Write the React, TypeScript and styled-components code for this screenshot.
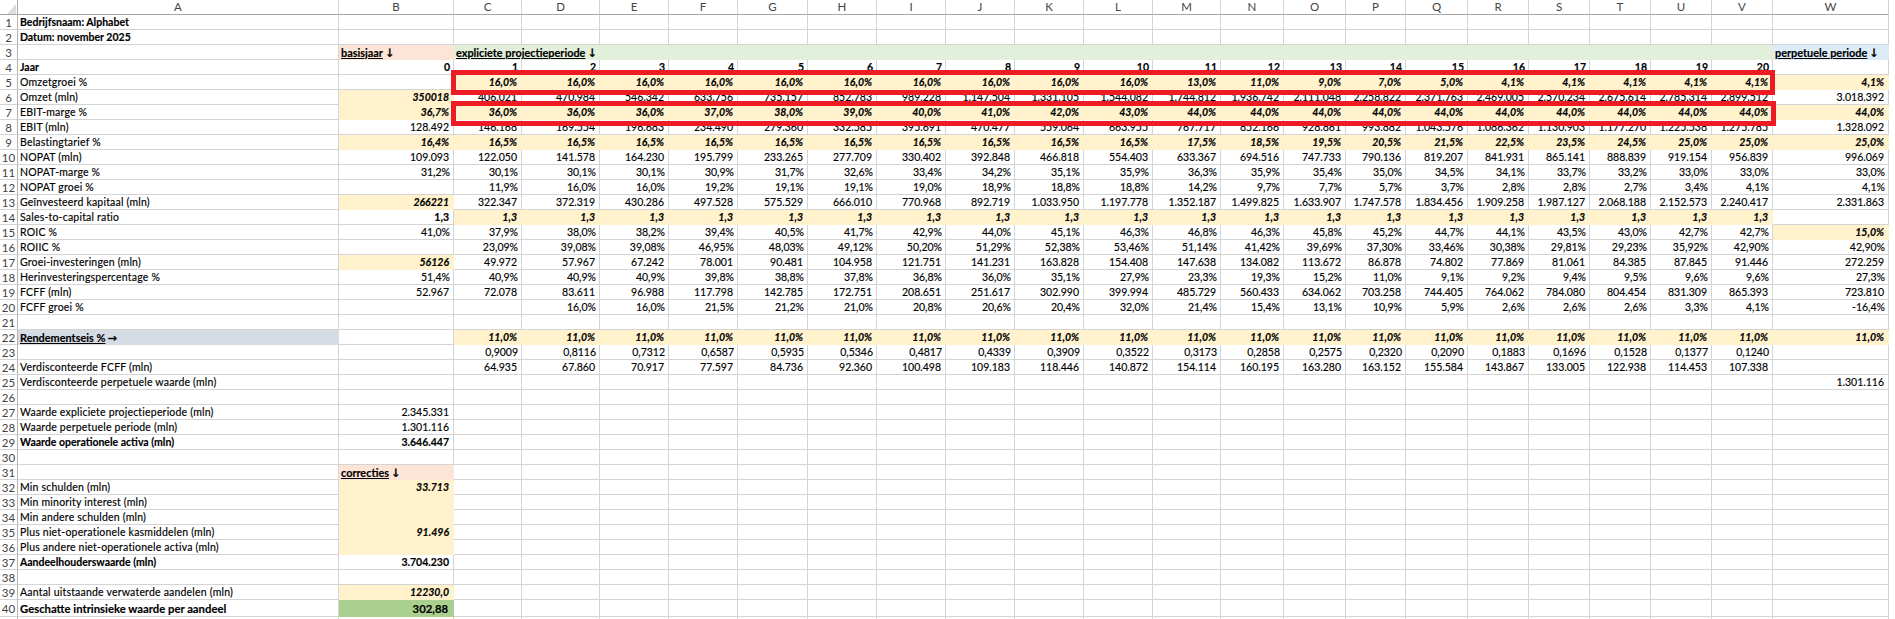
import React from 'react';
import styled, { createGlobalStyle } from 'styled-components';

const Global = createGlobalStyle`
  html, body { margin: 0; padding: 0; background: #fff; height: 619px; overflow: hidden; }
`;

const edges = [0, 18, 339, 454, 522, 600, 669, 738, 808, 877, 946, 1015, 1084, 1153, 1221, 1284, 1346, 1406, 1468, 1529, 1590, 1651, 1712, 1773, 1889];
const letters = 'ABCDEFGHIJKLMNOPQRSTUVW'.split('');

const colors = {
  grid: '#d4d4d4',
  input: '#fff2cc',
  salmon: '#fce4d6',
  green: '#e2efda',
  blue: '#ddebf7',
  slate: '#d6dce4',
  result: '#a9d08e',
};

const Sheet = styled.div`
  position: relative;
  width: 1889px;
  height: 619px;
  overflow: hidden;
`;

const Grid = styled.table`
  border-collapse: separate;
  border-spacing: 0;
  table-layout: fixed;
  width: 1889px;
  font-family: Lato, 'Liberation Sans', sans-serif;
  font-size: 10.5px;
  color: #000;
  -webkit-text-stroke: 0.15px #000;
`;

const Column = styled.col<{ $w: number }>`
  width: ${p => p.$w}px;
`;

const ColHead = styled.th`
  height: 15px;
  box-sizing: border-box;
  padding: 0;
  font-weight: 400;
  font-size: 11.5px;
  line-height: 14px;
  text-align: center;
  color: #444;
  -webkit-text-stroke: 0;
  border-right: 1px solid ${colors.grid};
  border-bottom: 1px solid #a6a6a6;
`;

const Corner = styled(ColHead)`
  border-right-color: #a6a6a6;
`;

const CornerMark = styled.svg`
  display: block;
  margin: 3px 0 0 7px;
`;

const RowHead = styled.th<{ $tall?: boolean }>`
  height: ${p => (p.$tall ? 17 : 15)}px;
  box-sizing: border-box;
  padding: 1px 0 0;
  font-weight: 400;
  font-size: 11.5px;
  line-height: 13px;
  text-align: center;
  color: #444;
  -webkit-text-stroke: 0;
  border-right: 1px solid #b4b4b4;
  border-bottom: 1px solid ${colors.grid};
`;

const cellSize = (p: { $large?: boolean; $head?: boolean }) => {
  if (p.$large) return '11.3px';
  if (p.$head) return '10.9px';
  return '10.5px';
};

const Cell = styled.td<{
  $fill?: string;
  $bold?: boolean;
  $italic?: boolean;
  $pad?: number;
  $large?: boolean;
  $left?: boolean;
  $head?: boolean;
}>`
  height: ${p => (p.$large ? 17 : 15)}px;
  box-sizing: border-box;
  padding: 1px ${p => p.$pad ?? 2}px 0 2px;
  line-height: 13px;
  white-space: nowrap;
  overflow: hidden;
  text-align: ${p => (p.$left ? 'left' : 'right')};
  font-size: ${cellSize};
  font-weight: ${p => (p.$bold ? 700 : 400)};
  font-style: ${p => (p.$italic ? 'italic' : 'normal')};
  letter-spacing: ${p => (p.$left && !p.$bold ? '0.2px' : '0')};
  background: ${p => p.$fill ?? 'transparent'};
  border-right: 1px solid ${p => p.$fill ?? colors.grid};
  border-bottom: 1px solid ${p => p.$fill ?? colors.grid};
`;

const Underlined = styled.span`
  text-decoration: underline;
`;

const Arrow = styled.span`
  font-family: 'DejaVu Sans', sans-serif;
  font-weight: 700;
  font-size: 11.5px;
  line-height: 0;
  margin-left: 2px;
`;

const RedBox = styled.div<{ $top: number; $right: number }>`
  position: absolute;
  left: 451px;
  top: ${p => p.$top}px;
  width: ${p => p.$right - 451}px;
  height: 25px;
  box-sizing: border-box;
  border: 5px solid #ed1c24;
`;

type Kind = 'num' | 'pct' | 'input' | 'strong';
type RowData = {
  n: number;
  label?: string;
  strong?: boolean;
  b?: string;
  bKind?: Kind;
  vals?: string[];
  kind?: Kind;
  wKind?: Kind;
};

const list = (s: string) => s.split(' ').map(x => (x === '_' ? '' : x));
const pct = (s: string) => s.split(' ').map(x => (x === '_' ? '' : `${x}%`));
const rep = (s: string, n: number) => Array(n).fill(s).join(' ');

const rows: RowData[] = [
  { n: 5, label: 'Omzetgroei %', vals: pct(`${rep('16,0', 10)} 13,0 11,0 9,0 7,0 5,0 ${rep('4,1', 6)}`), kind: 'input' },
  { n: 6, label: 'Omzet (mln)', b: '350018', bKind: 'input', vals: list('406.021 470.984 546.342 633.756 735.157 852.783 989.228 1.147.504 1.331.105 1.544.082 1.744.812 1.936.742 2.111.048 2.258.822 2.371.763 2.469.005 2.570.234 2.675.614 2.785.314 2.899.512 3.018.392'), kind: 'num' },
  { n: 7, label: 'EBIT-marge %', b: '36,7%', bKind: 'input', vals: pct(`36,0 36,0 36,0 37,0 38,0 39,0 40,0 41,0 42,0 43,0 ${rep('44,0', 11)}`), kind: 'input' },
  { n: 8, label: 'EBIT (mln)', b: '128.492', bKind: 'num', vals: list('146.168 169.554 196.683 234.490 279.360 332.585 395.691 470.477 559.064 663.955 767.717 852.166 928.861 993.882 1.043.576 1.086.362 1.130.903 1.177.270 1.225.538 1.275.785 1.328.092'), kind: 'num' },
  { n: 9, label: 'Belastingtarief %', b: '16,4%', bKind: 'input', vals: pct(`${rep('16,5', 10)} 17,5 18,5 19,5 20,5 21,5 22,5 23,5 24,5 25,0 25,0 25,0`), kind: 'input' },
  { n: 10, label: 'NOPAT (mln)', b: '109.093', bKind: 'num', vals: list('122.050 141.578 164.230 195.799 233.265 277.709 330.402 392.848 466.818 554.403 633.367 694.516 747.733 790.136 819.207 841.931 865.141 888.839 919.154 956.839 996.069'), kind: 'num' },
  { n: 11, label: 'NOPAT-marge %', b: '31,2%', bKind: 'pct', vals: pct('30,1 30,1 30,1 30,9 31,7 32,6 33,4 34,2 35,1 35,9 36,3 35,9 35,4 35,0 34,5 34,1 33,7 33,2 33,0 33,0 33,0'), kind: 'pct' },
  { n: 12, label: 'NOPAT groei %', vals: pct('11,9 16,0 16,0 19,2 19,1 19,1 19,0 18,9 18,8 18,8 14,2 9,7 7,7 5,7 3,7 2,8 2,8 2,7 3,4 4,1 4,1'), kind: 'pct' },
  { n: 13, label: 'Geïnvesteerd kapitaal (mln)', b: '266221', bKind: 'input', vals: list('322.347 372.319 430.286 497.528 575.529 666.010 770.968 892.719 1.033.950 1.197.778 1.352.187 1.499.825 1.633.907 1.747.578 1.834.456 1.909.258 1.987.127 2.068.188 2.152.573 2.240.417 2.331.863'), kind: 'num' },
  { n: 14, label: 'Sales-to-capital ratio', b: '1,3', bKind: 'strong', vals: [...list(rep('1,3', 20)), ''], kind: 'input', wKind: 'num' },
  { n: 15, label: 'ROIC %', b: '41,0%', bKind: 'pct', vals: pct('37,9 38,0 38,2 39,4 40,5 41,7 42,9 44,0 45,1 46,3 46,8 46,3 45,8 45,2 44,7 44,1 43,5 43,0 42,7 42,7 15,0'), kind: 'pct', wKind: 'input' },
  { n: 16, label: 'ROIIC %', vals: pct('23,09 39,08 39,08 46,95 48,03 49,12 50,20 51,29 52,38 53,46 51,14 41,42 39,69 37,30 33,46 30,38 29,81 29,23 35,92 42,90 42,90'), kind: 'pct' },
  { n: 17, label: 'Groei-investeringen (mln)', b: '56126', bKind: 'input', vals: list('49.972 57.967 67.242 78.001 90.481 104.958 121.751 141.231 163.828 154.408 147.638 134.082 113.672 86.878 74.802 77.869 81.061 84.385 87.845 91.446 272.259'), kind: 'num' },
  { n: 18, label: 'Herinvesteringspercentage %', b: '51,4%', bKind: 'pct', vals: pct('40,9 40,9 40,9 39,8 38,8 37,8 36,8 36,0 35,1 27,9 23,3 19,3 15,2 11,0 9,1 9,2 9,4 9,5 9,6 9,6 27,3'), kind: 'pct' },
  { n: 19, label: 'FCFF (mln)', b: '52.967', bKind: 'num', vals: list('72.078 83.611 96.988 117.798 142.785 172.751 208.651 251.617 302.990 399.994 485.729 560.433 634.062 703.258 744.405 764.062 784.080 804.454 831.309 865.393 723.810'), kind: 'num' },
  { n: 20, label: 'FCFF groei %', vals: pct('_ 16,0 16,0 21,5 21,2 21,0 20,8 20,6 20,4 32,0 21,4 15,4 13,1 10,9 5,9 2,6 2,6 2,6 3,3 4,1 -16,4'), kind: 'pct' },
  { n: 21 },
  { n: 22, vals: pct(rep('11,0', 21)), kind: 'input' },
  { n: 23, vals: list('0,9009 0,8116 0,7312 0,6587 0,5935 0,5346 0,4817 0,4339 0,3909 0,3522 0,3173 0,2858 0,2575 0,2320 0,2090 0,1883 0,1696 0,1528 0,1377 0,1240 _'), kind: 'pct' },
  { n: 24, label: 'Verdisconteerde FCFF (mln)', vals: list('64.935 67.860 70.917 77.597 84.736 92.360 100.498 109.183 118.446 140.872 154.114 160.195 163.280 163.152 155.584 143.867 133.005 122.938 114.453 107.338 _'), kind: 'num' },
  { n: 25, label: 'Verdisconteerde perpetuele waarde (mln)', vals: [...Array(20).fill(''), '1.301.116'], kind: 'num' },
  { n: 26 },
  { n: 27, label: 'Waarde expliciete projectieperiode (mln)', b: '2.345.331', bKind: 'num' },
  { n: 28, label: 'Waarde perpetuele periode (mln)', b: '1.301.116', bKind: 'num' },
  { n: 29, label: 'Waarde operationele activa (mln)', strong: true, b: '3.646.447', bKind: 'strong' },
  { n: 30 },
  { n: 32, label: 'Min schulden (mln)', b: '33.713', bKind: 'input' },
  { n: 33, label: 'Min minority interest (mln)', b: '', bKind: 'input' },
  { n: 34, label: 'Min andere schulden (mln)', b: '', bKind: 'input' },
  { n: 35, label: 'Plus niet-operationele kasmiddelen (mln)', b: '91.496', bKind: 'input' },
  { n: 36, label: 'Plus andere niet-operationele activa (mln)', b: '', bKind: 'input' },
  { n: 37, label: 'Aandeelhouderswaarde (mln)', strong: true, b: '3.704.230', bKind: 'strong' },
  { n: 38 },
  { n: 39, label: 'Aantal uitstaande verwaterde aandelen (mln)', b: '12230,0', bKind: 'input' },
];

const Value = ({ kind, text }: { kind?: Kind; text?: string }) => (
  <Cell
    $fill={kind === 'input' ? colors.input : undefined}
    $bold={kind === 'input' || kind === 'strong'}
    $italic={kind === 'input'}
    $pad={kind === 'pct' ? 3 : 4}
  >
    {text}
  </Cell>
);

const Blanks = ({ count }: { count: number }) => (
  <>
    {Array.from({ length: count }, (_, i) => (
      <Cell key={i} />
    ))}
  </>
);

const Heading = ({ children, fill, span }: { children: string; fill: string; span?: number }) => (
  <Cell $fill={fill} $left $bold $head colSpan={span}>
    <Underlined>{children}</Underlined>
    <Arrow>↓</Arrow>
  </Cell>
);

const DataRow = ({ row }: { row: RowData }) => (
  <tr>
    <RowHead>{row.n}</RowHead>
    <Cell $left $bold={row.strong}>{row.label}</Cell>
    <Value kind={row.bKind} text={row.b} />
    {row.vals ? (
      row.vals.map((v, i) => (
        <Value key={i} kind={i === 20 && row.wKind ? row.wKind : row.kind} text={v} />
      ))
    ) : (
      <Blanks count={21} />
    )}
  </tr>
);

const Target = ({ row }: { row: RowData }) =>
  row.n === 22 ? (
    <tr>
      <RowHead>22</RowHead>
      <Cell $left $bold $head $fill={colors.slate}>
        <Underlined>Rendementseis %</Underlined>
        <Arrow>→</Arrow>
      </Cell>
      <Cell />
      {row.vals!.map((v, i) => (
        <Value key={i} kind="input" text={v} />
      ))}
    </tr>
  ) : (
    <DataRow row={row} />
  );

const Years = () => (
  <tr>
    <RowHead>4</RowHead>
    <Cell $left $bold>Jaar</Cell>
    {Array.from({ length: 21 }, (_, i) => (
      <Cell key={i} $bold $pad={3}>{i}</Cell>
    ))}
    <Cell />
  </tr>
);

export default function App() {
  return (
    <Sheet>
      <Global />
      <Grid>
        <colgroup>
          {edges.slice(1).map((e, i) => (
            <Column key={i} $w={e - edges[i]} />
          ))}
        </colgroup>
        <thead>
          <tr>
            <Corner>
              <CornerMark width="9" height="10" viewBox="0 0 9 10">
                <polygon points="9,0 9,10 0,10" fill="#dcdcdc" />
              </CornerMark>
            </Corner>
            {letters.map(l => (
              <ColHead key={l}>{l}</ColHead>
            ))}
          </tr>
        </thead>
        <tbody>
          <tr>
            <RowHead>1</RowHead>
            <Cell $left $bold>Bedrijfsnaam: Alphabet</Cell>
            <Blanks count={22} />
          </tr>
          <tr>
            <RowHead>2</RowHead>
            <Cell $left $bold>Datum: november 2025</Cell>
            <Blanks count={22} />
          </tr>
          <tr>
            <RowHead>3</RowHead>
            <Cell />
            <Heading fill={colors.salmon}>basisjaar</Heading>
            <Heading fill={colors.green} span={20}>expliciete projectieperiode</Heading>
            <Heading fill={colors.blue}>perpetuele periode</Heading>
          </tr>
          <Years />
          {rows.filter(r => r.n <= 30).map(r => (
            <Target key={r.n} row={r} />
          ))}
          <tr>
            <RowHead>31</RowHead>
            <Cell />
            <Heading fill={colors.salmon}>correcties</Heading>
            <Blanks count={21} />
          </tr>
          {rows.filter(r => r.n > 31).map(r => (
            <DataRow key={r.n} row={r} />
          ))}
          <tr>
            <RowHead $tall>40</RowHead>
            <Cell $left $bold $large>Geschatte intrinsieke waarde per aandeel</Cell>
            <Cell $fill={colors.result} $bold $large $pad={5}>302,88</Cell>
            <Blanks count={21} />
          </tr>
          <tr>
            <RowHead />
            <Blanks count={23} />
          </tr>
        </tbody>
      </Grid>
      <RedBox $top={70} $right={1775} />
      <RedBox $top={101} $right={1776} />
    </Sheet>
  );
}
